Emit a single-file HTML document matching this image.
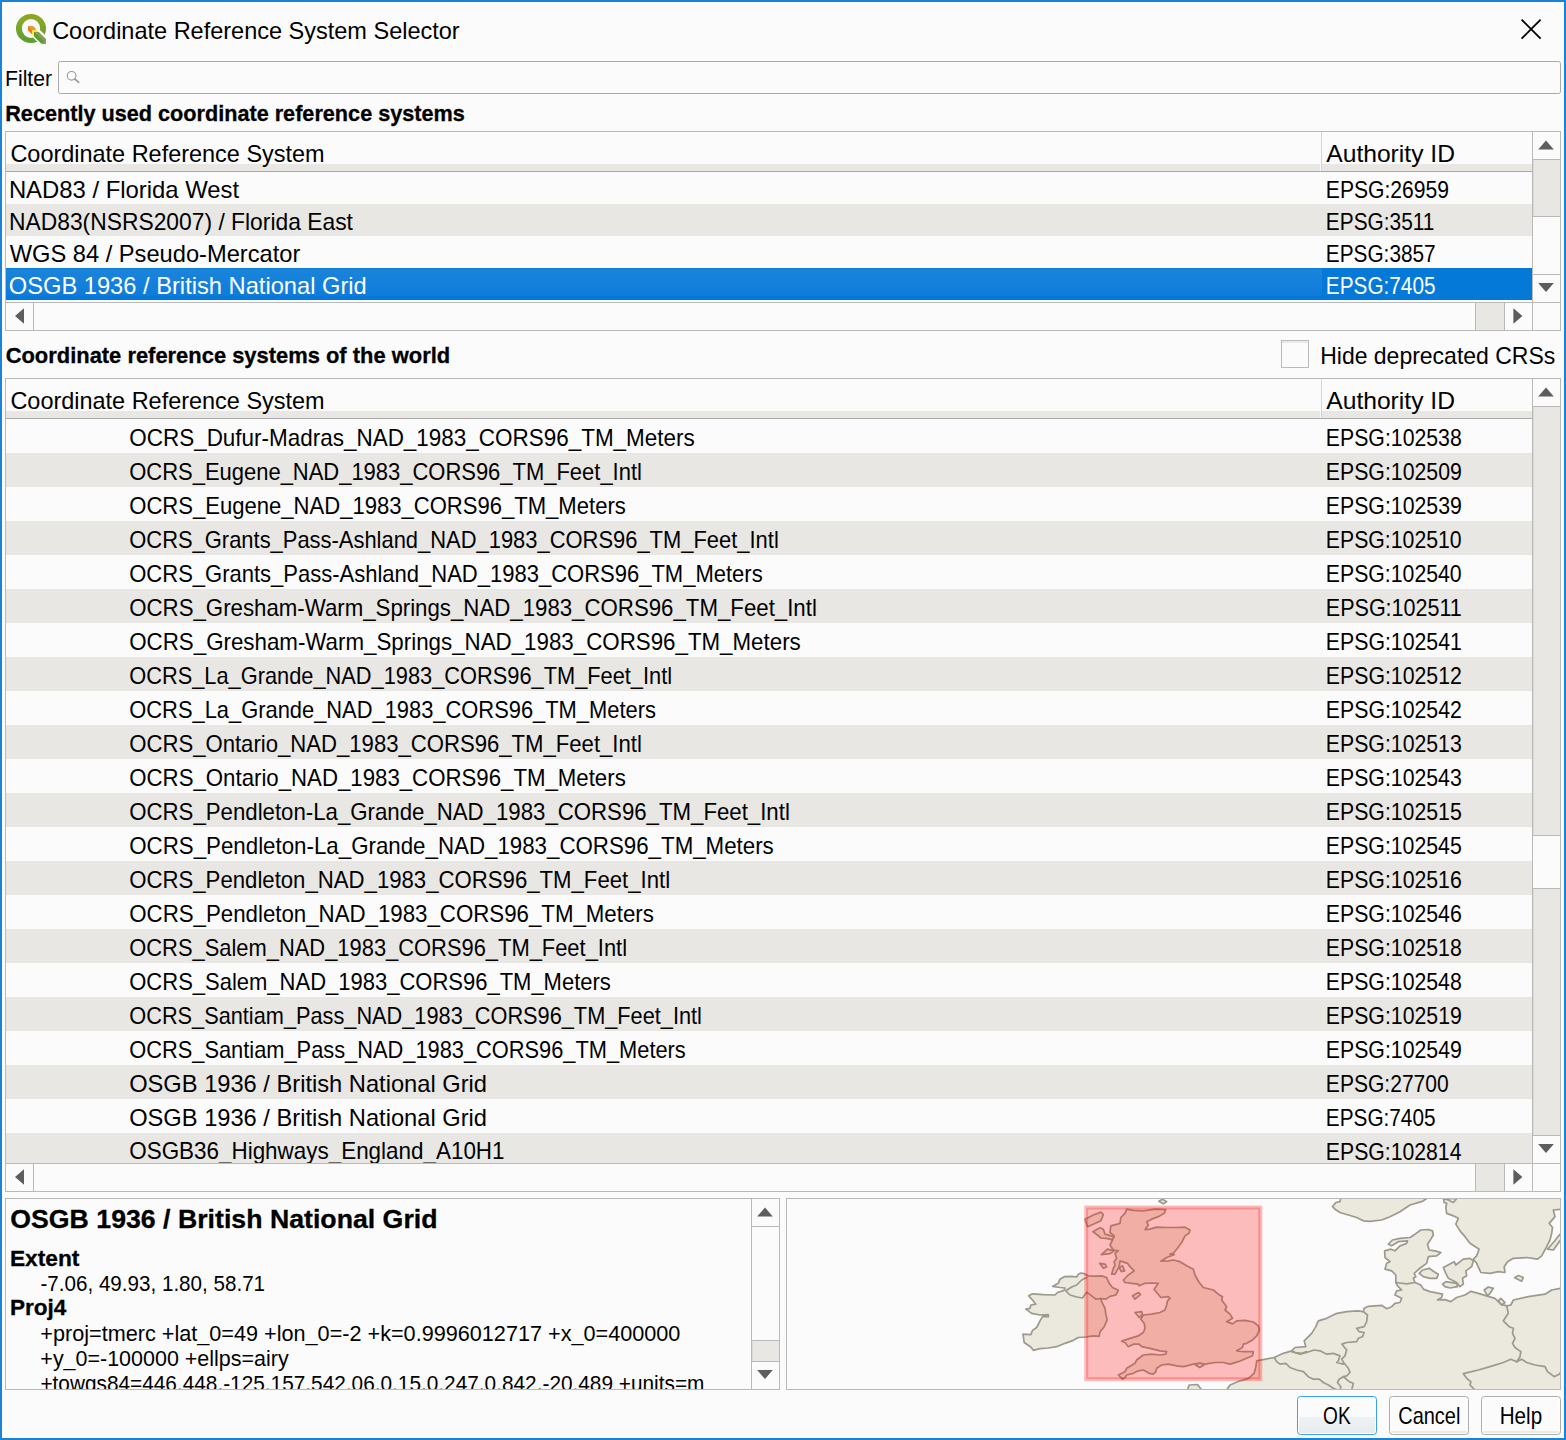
<!DOCTYPE html>
<html lang="en"><head><meta charset="utf-8"><title>Coordinate Reference System Selector</title>
<style>
html,body{margin:0;padding:0;background:#fbfbfb;}
body{width:1566px;height:1440px;overflow:hidden;font-family:"Liberation Sans",sans-serif;font-size:24px;color:#000;}
#win{position:relative;width:1566px;height:1440px;background:#fbfbfb;overflow:hidden;}
#win *{box-sizing:border-box;}
.abs,.t,.grp{position:absolute;}
.grp{left:0;top:0;}
.t{white-space:pre;line-height:40px;font-size:24px;transform-origin:0 0;margin:0;font-weight:400;}
.b{font-weight:700;-webkit-text-stroke:0.3px #000;}
.s22{font-size:22px;}
.s225{font-size:22.5px;}
.s26{font-size:26px;}
.w{color:#fff;}
.frame{position:absolute;left:0;top:0;width:1566px;height:1440px;border:2px solid #1883d7;pointer-events:none;}
.box{position:absolute;border:1px solid #b9b9b8;background:#fbfbfb;}
.hl{position:absolute;height:1px;background:#b9b9b8;}
.vl{position:absolute;width:1px;background:#b9b9b8;}
.alt{position:absolute;background:#e9e7e3;}
.groove{position:absolute;background:#e8e7e3;}
.row{position:absolute;left:6px;width:1526px;}
.row.odd{background:#e9e7e3;}
.clip{position:absolute;overflow:hidden;}
.btn{position:absolute;top:1396px;width:80px;height:39px;border:1px solid #adadad;border-radius:3.5px;background:linear-gradient(to bottom,#fbfbfb 0,#fbfbfb 34px,#eceae6 34.5px,#eceae6 100%);box-shadow:inset 0 0 0 1px #fdfdfd;}
.btn.def{border-color:#3d9ff1;background:linear-gradient(to bottom,#fbfbfb 0,#fbfbfb 20px,#eef2f6 20.5px,#e8edf1 33px,#ece9e5 35px);}
svg{position:absolute;overflow:visible;}
</style></head><body><div id="win">
<div class="grp titlebar">
<svg class="qicon" style="left:14px;top:12px" width="34" height="34" viewBox="14 12 34 34">
<defs><linearGradient id="qg" gradientUnits="userSpaceOnUse" x1="0" y1="13.9" x2="0" y2="43.1"><stop offset="0" stop-color="#97a020"/><stop offset="0.2" stop-color="#87a924"/><stop offset="0.5" stop-color="#76a52a"/><stop offset="0.8" stop-color="#649f2e"/><stop offset="1" stop-color="#5c9d30"/></linearGradient></defs>
<path fill="url(#qg)" fill-rule="evenodd" d="M15.95 28.5 a15.05 14.6 0 1 0 30.1 0 a15.05 14.6 0 1 0 -30.1 0 Z M21.9 28.5 a9.1 9.4 0 1 0 18.2 0 a9.1 9.4 0 1 0 -18.2 0 Z"/>
<path d="M35 25.1 L52 42.1 L52 56.5 L30 34.5 Z" fill="#fbfbfb"/>
<path d="M34 32 L38.6 32 L46 39.3 L46 43.8 L41.3 43.8 L34 36.5 Z" fill="#5f9f30"/>
<path d="M34.2 32 L38.6 32 L46 39.3 L46 42.6 Z" fill="#8e9c5b"/>
<path d="M44.2 41 L46 39.5 L46 43.8 L43 43.8 Z" fill="#76aa50"/>
<path d="M28 26 L32.8 26 L36.2 29.4 L32 30.3 L32 34.2 L28 30.6 Z" fill="#ee7c15"/>
<path d="M28 26 L32.8 26 L36.2 29.4 L32 30.3 Z" fill="#f1933c"/>
<path d="M32 30.3 L36.8 30 L38.4 32 L34 32 L34 36.2 L32 34.2 Z" fill="#f6e73f"/>
</svg>
<div class="t" style="left:52px;top:11px;transform:translateX(0.13px) scaleX(0.9792)">Coordinate Reference System Selector</div>
<svg class="close" style="left:1519px;top:17px" width="24" height="24" viewBox="1519 17 24 24"><path d="M1521.6 19.6 L1540.6 38.6 M1540.6 19.6 L1521.6 38.6" stroke="#000" stroke-width="1.85" fill="none"/></svg>
</div>
<div class="grp filterrow">
<label class="t s22" style="left:4px;top:59px;transform:translateX(1.00px) scaleX(0.9623)">Filter</label>
<div class="abs search" style="left:58px;top:61px;width:1503px;height:33px;border:1px solid #a9a9a7;border-radius:2.5px;background:#fbfbfb"></div>
<svg style="left:64px;top:69px" width="18" height="16" viewBox="64 69 18 16"><circle cx="71.6" cy="75.8" r="4.3" fill="none" stroke="#9a9a98" stroke-width="1.1"/><path d="M74.8 79 L78.7 82.4" stroke="#9a9a98" stroke-width="1.7" stroke-linecap="round"/></svg>
</div>
<div class="t b s225" style="left:5px;top:94px;transform:translateX(0.23px) scaleX(0.9621)">Recently used coordinate reference systems</div>
<div class="grp tree recent">
<div class="box" style="left:5px;top:131px;width:1556px;height:200px"></div>
<div class="grp thead">
<div class="alt" style="left:6px;top:164px;width:1526px;height:7px"></div>
<div class="hl" style="left:6px;top:171px;width:1526px;background:#a9a9a7"></div>
<div class="vl" style="left:1320px;top:164px;height:7px;background:#fbfbfb"></div>
<div class="vl" style="left:1321px;top:132px;height:39px;background:#d6d6d5"></div>
<span class="t" style="left:10px;top:134px;transform:translateX(0.43px) scaleX(0.9771)">Coordinate Reference System</span>
<span class="t" style="left:1326px;top:134px;transform:translateX(0.27px) scaleX(1.0260)">Authority ID</span>
</div>
<div class="grp tbody">
<span class="t" style="left:8px;top:170px;transform:translateX(0.89px) scaleX(0.9941)">NAD83 / Florida West</span>
<span class="t" style="left:1325px;top:170px;transform:translateX(0.84px) scaleX(0.8794)">EPSG:26959</span>
<div class="row odd" style="top:204px;height:32px"></div>
<span class="t" style="left:8px;top:202px;transform:translateX(0.99px) scaleX(0.9514)">NAD83(NSRS2007) / Florida East</span>
<span class="t" style="left:1325px;top:202px;transform:translateX(0.86px) scaleX(0.8684)">EPSG:3511</span>
<span class="t" style="left:9px;top:234px;transform:translateX(0.69px) scaleX(0.9860)">WGS 84 / Pseudo-Mercator</span>
<span class="t" style="left:1325px;top:234px;transform:translateX(0.87px) scaleX(0.8658)">EPSG:3857</span>
<div class="row sel" style="top:268px;height:32px;background:linear-gradient(to bottom,#0a7bd9 0,#1a84da 2px,#1480db 16px,#0e7cdb 27px,#0479d8 29px)"></div>
<div class="abs" style="left:1322px;top:268px;width:210px;height:32px;background:#0479d8"></div>
<span class="t w" style="left:8px;top:266px;transform:translateX(0.78px) scaleX(0.9866)">OSGB 1936 / British National Grid</span>
<span class="t w" style="left:1325px;top:266px;transform:translateX(0.87px) scaleX(0.8648)">EPSG:7405</span>
</div>
<div class="grp vscroll">
<div class="vl" style="left:1532px;top:132px;height:170px"></div>
<div class="groove" style="left:1533px;top:160px;width:27px;height:114px"></div>
<div class="vl" style="left:1533px;top:160px;height:114px;background:#dad9d7"></div>
<div class="abs thumb" style="left:1533px;top:217px;width:27px;height:57px;background:#fbfbfb"></div>
<div class="hl" style="left:1533px;top:216px;width:27px"></div>
<div class="hl" style="left:1533px;top:274px;width:27px"></div>
<div class="hl" style="left:1533px;top:159px;width:27px"></div>
<svg style="left:1537px;top:139px" width="19" height="12" viewBox="1537 139 19 12"><polygon points="1546,140.6 1553.8,149.6 1538.2,149.6" fill="#5d5d5b"/></svg>
<svg style="left:1537px;top:282px" width="19" height="12" viewBox="1537 282 19 12"><polygon points="1546,292.1 1553.8,283.1 1538.2,283.1" fill="#5d5d5b"/></svg>
</div>
<div class="grp hscroll">
<div class="hl" style="left:6px;top:302px;width:1554px"></div>
<div class="groove" style="left:34px;top:303px;width:1470px;height:27px"></div>
<div class="abs thumb" style="left:34px;top:303px;width:1441px;height:27px;background:#fbfbfb"></div>
<div class="vl" style="left:1504px;top:303px;height:27px"></div>
<div class="vl" style="left:33px;top:303px;height:27px"></div>
<div class="vl" style="left:1475px;top:303px;height:27px"></div>
<div class="vl" style="left:1532px;top:303px;height:27px"></div>
<svg style="left:14px;top:307px" width="12" height="19" viewBox="14 307 12 19"><polygon points="15,316 24,308.2 24,323.8" fill="#5d5d5b"/></svg>
<svg style="left:1512px;top:307px" width="12" height="19" viewBox="1512 307 12 19"><polygon points="1522.4,316 1513.4,308.2 1513.4,323.8" fill="#5d5d5b"/></svg>
</div>
</div>
<div class="t b s225" style="left:5px;top:336px;transform:translateX(0.64px) scaleX(0.9740)">Coordinate reference systems of the world</div>
<div class="grp checkbox">
<div class="abs" style="left:1281px;top:340px;width:28px;height:28px;border:1px solid #bbbbba;background:linear-gradient(to bottom,#eceae6 0,#eceae6 2px,#fbfbfb 2px)"></div>
<label class="t" style="left:1320px;top:336px;transform:translateX(0.17px) scaleX(0.9577)">Hide deprecated CRSs</label>
</div>
<div class="grp tree world">
<div class="box" style="left:5px;top:378px;width:1556px;height:814px"></div>
<div class="grp thead">
<div class="alt" style="left:6px;top:411px;width:1526px;height:7px"></div>
<div class="hl" style="left:6px;top:418px;width:1526px;background:#a9a9a7"></div>
<div class="vl" style="left:1320px;top:411px;height:7px;background:#fbfbfb"></div>
<div class="vl" style="left:1321px;top:379px;height:39px;background:#d6d6d5"></div>
<span class="t" style="left:10px;top:381px;transform:translateX(0.43px) scaleX(0.9771)">Coordinate Reference System</span>
<span class="t" style="left:1326px;top:381px;transform:translateX(0.27px) scaleX(1.0260)">Authority ID</span>
</div>
<div class="clip tbody" style="left:0;top:419px;width:1532px;height:744px">
<span class="t" style="left:129px;top:-1px;transform:translateX(0.24px) scaleX(0.9359)">OCRS_Dufur-Madras_NAD_1983_CORS96_TM_Meters</span>
<span class="t" style="left:1325px;top:-1px;transform:translateX(0.82px) scaleX(0.8858)">EPSG:102538</span>
<div class="row odd" style="top:34px;height:34px"></div>
<span class="t" style="left:129px;top:33px;transform:translateX(0.27px) scaleX(0.9149)">OCRS_Eugene_NAD_1983_CORS96_TM_Feet_Intl</span>
<span class="t" style="left:1325px;top:33px;transform:translateX(0.82px) scaleX(0.8861)">EPSG:102509</span>
<span class="t" style="left:129px;top:67px;transform:translateX(0.26px) scaleX(0.9190)">OCRS_Eugene_NAD_1983_CORS96_TM_Meters</span>
<span class="t" style="left:1325px;top:67px;transform:translateX(0.82px) scaleX(0.8861)">EPSG:102539</span>
<div class="row odd" style="top:102px;height:34px"></div>
<span class="t" style="left:129px;top:101px;transform:translateX(0.27px) scaleX(0.9135)">OCRS_Grants_Pass-Ashland_NAD_1983_CORS96_TM_Feet_Intl</span>
<span class="t" style="left:1325px;top:101px;transform:translateX(0.83px) scaleX(0.8852)">EPSG:102510</span>
<span class="t" style="left:129px;top:135px;transform:translateX(0.26px) scaleX(0.9167)">OCRS_Grants_Pass-Ashland_NAD_1983_CORS96_TM_Meters</span>
<span class="t" style="left:1325px;top:135px;transform:translateX(0.83px) scaleX(0.8852)">EPSG:102540</span>
<div class="row odd" style="top:170px;height:34px"></div>
<span class="t" style="left:129px;top:169px;transform:translateX(0.25px) scaleX(0.9266)">OCRS_Gresham-Warm_Springs_NAD_1983_CORS96_TM_Feet_Intl</span>
<span class="t" style="left:1325px;top:169px;transform:translateX(0.80px) scaleX(0.8970)">EPSG:102511</span>
<span class="t" style="left:129px;top:203px;transform:translateX(0.25px) scaleX(0.9300)">OCRS_Gresham-Warm_Springs_NAD_1983_CORS96_TM_Meters</span>
<span class="t" style="left:1325px;top:203px;transform:translateX(0.82px) scaleX(0.8863)">EPSG:102541</span>
<div class="row odd" style="top:238px;height:34px"></div>
<span class="t" style="left:129px;top:237px;transform:translateX(0.27px) scaleX(0.9082)">OCRS_La_Grande_NAD_1983_CORS96_TM_Feet_Intl</span>
<span class="t" style="left:1325px;top:237px;transform:translateX(0.82px) scaleX(0.8864)">EPSG:102512</span>
<span class="t" style="left:129px;top:271px;transform:translateX(0.27px) scaleX(0.9117)">OCRS_La_Grande_NAD_1983_CORS96_TM_Meters</span>
<span class="t" style="left:1325px;top:271px;transform:translateX(0.82px) scaleX(0.8864)">EPSG:102542</span>
<div class="row odd" style="top:306px;height:34px"></div>
<span class="t" style="left:129px;top:305px;transform:translateX(0.26px) scaleX(0.9215)">OCRS_Ontario_NAD_1983_CORS96_TM_Feet_Intl</span>
<span class="t" style="left:1325px;top:305px;transform:translateX(0.82px) scaleX(0.8859)">EPSG:102513</span>
<span class="t" style="left:129px;top:339px;transform:translateX(0.25px) scaleX(0.9259)">OCRS_Ontario_NAD_1983_CORS96_TM_Meters</span>
<span class="t" style="left:1325px;top:339px;transform:translateX(0.82px) scaleX(0.8859)">EPSG:102543</span>
<div class="row odd" style="top:374px;height:34px"></div>
<span class="t" style="left:129px;top:373px;transform:translateX(0.25px) scaleX(0.9255)">OCRS_Pendleton-La_Grande_NAD_1983_CORS96_TM_Feet_Intl</span>
<span class="t" style="left:1325px;top:373px;transform:translateX(0.82px) scaleX(0.8856)">EPSG:102515</span>
<span class="t" style="left:129px;top:407px;transform:translateX(0.25px) scaleX(0.9291)">OCRS_Pendleton-La_Grande_NAD_1983_CORS96_TM_Meters</span>
<span class="t" style="left:1325px;top:407px;transform:translateX(0.82px) scaleX(0.8856)">EPSG:102545</span>
<div class="row odd" style="top:442px;height:34px"></div>
<span class="t" style="left:129px;top:441px;transform:translateX(0.26px) scaleX(0.9235)">OCRS_Pendleton_NAD_1983_CORS96_TM_Feet_Intl</span>
<span class="t" style="left:1325px;top:441px;transform:translateX(0.82px) scaleX(0.8859)">EPSG:102516</span>
<span class="t" style="left:129px;top:475px;transform:translateX(0.25px) scaleX(0.9275)">OCRS_Pendleton_NAD_1983_CORS96_TM_Meters</span>
<span class="t" style="left:1325px;top:475px;transform:translateX(0.82px) scaleX(0.8859)">EPSG:102546</span>
<div class="row odd" style="top:510px;height:34px"></div>
<span class="t" style="left:129px;top:509px;transform:translateX(0.27px) scaleX(0.9123)">OCRS_Salem_NAD_1983_CORS96_TM_Feet_Intl</span>
<span class="t" style="left:1325px;top:509px;transform:translateX(0.82px) scaleX(0.8858)">EPSG:102518</span>
<span class="t" style="left:129px;top:543px;transform:translateX(0.26px) scaleX(0.9163)">OCRS_Salem_NAD_1983_CORS96_TM_Meters</span>
<span class="t" style="left:1325px;top:543px;transform:translateX(0.82px) scaleX(0.8858)">EPSG:102548</span>
<div class="row odd" style="top:578px;height:34px"></div>
<span class="t" style="left:129px;top:577px;transform:translateX(0.28px) scaleX(0.9056)">OCRS_Santiam_Pass_NAD_1983_CORS96_TM_Feet_Intl</span>
<span class="t" style="left:1325px;top:577px;transform:translateX(0.82px) scaleX(0.8861)">EPSG:102519</span>
<span class="t" style="left:129px;top:611px;transform:translateX(0.27px) scaleX(0.9089)">OCRS_Santiam_Pass_NAD_1983_CORS96_TM_Meters</span>
<span class="t" style="left:1325px;top:611px;transform:translateX(0.82px) scaleX(0.8861)">EPSG:102549</span>
<div class="row odd" style="top:646px;height:34px"></div>
<span class="t" style="left:129px;top:645px;transform:translateX(0.18px) scaleX(0.9860)">OSGB 1936 / British National Grid</span>
<span class="t" style="left:1325px;top:645px;transform:translateX(0.84px) scaleX(0.8771)">EPSG:27700</span>
<span class="t" style="left:129px;top:679px;transform:translateX(0.18px) scaleX(0.9860)">OSGB 1936 / British National Grid</span>
<span class="t" style="left:1325px;top:679px;transform:translateX(0.87px) scaleX(0.8648)">EPSG:7405</span>
<div class="row odd" style="top:714px;height:34px"></div>
<span class="t" style="left:129px;top:712px;transform:translateX(0.24px) scaleX(0.9345)">OSGB36_Highways_England_A10H1</span>
<span class="t" style="left:1325px;top:713px;transform:translateX(0.83px) scaleX(0.8839)">EPSG:102814</span>
</div>
<div class="grp vscroll">
<div class="vl" style="left:1532px;top:379px;height:784px"></div>
<div class="groove" style="left:1533px;top:407px;width:27px;height:728px"></div>
<div class="vl" style="left:1533px;top:407px;height:728px;background:#dad9d7"></div>
<div class="abs thumb" style="left:1533px;top:836px;width:27px;height:52px;background:#fbfbfb"></div>
<div class="hl" style="left:1533px;top:888px;width:27px"></div>
<div class="hl" style="left:1533px;top:835px;width:27px"></div>
<div class="hl" style="left:1533px;top:406px;width:27px"></div>
<div class="hl" style="left:1533px;top:1135px;width:27px"></div>
<svg style="left:1537px;top:386px" width="19" height="12" viewBox="1537 386 19 12"><polygon points="1546,387.6 1553.8,396.6 1538.2,396.6" fill="#5d5d5b"/></svg>
<svg style="left:1537px;top:1143px" width="19" height="12" viewBox="1537 1143 19 12"><polygon points="1546,1153.1 1553.8,1144.1 1538.2,1144.1" fill="#5d5d5b"/></svg>
</div>
<div class="grp hscroll">
<div class="hl" style="left:6px;top:1163px;width:1554px"></div>
<div class="groove" style="left:34px;top:1164px;width:1470px;height:27px"></div>
<div class="abs thumb" style="left:34px;top:1164px;width:1441px;height:27px;background:#fbfbfb"></div>
<div class="vl" style="left:1504px;top:1164px;height:27px"></div>
<div class="vl" style="left:33px;top:1164px;height:27px"></div>
<div class="vl" style="left:1475px;top:1164px;height:27px"></div>
<div class="vl" style="left:1532px;top:1164px;height:27px"></div>
<svg style="left:14px;top:1168px" width="12" height="19" viewBox="14 1168 12 19"><polygon points="15,1177 24,1169.2 24,1184.8" fill="#5d5d5b"/></svg>
<svg style="left:1512px;top:1168px" width="12" height="19" viewBox="1512 1168 12 19"><polygon points="1522.4,1177 1513.4,1169.2 1513.4,1184.8" fill="#5d5d5b"/></svg>
</div>
</div>
<div class="grp info">
<div class="box" style="left:5px;top:1198px;width:775px;height:192px"></div>
<div class="clip" style="left:6px;top:1199px;width:745px;height:190px">
<div class="t b s26" style="left:4px;top:0px;transform:translateX(0.28px) scaleX(1.0267)">OSGB 1936 / British National Grid</div>
<div class="t b s225" style="left:3px;top:40px;transform:translateX(0.95px) scaleX(1.0103)">Extent</div>
<div class="t s22" style="left:34px;top:65px;transform:translateX(0.45px) scaleX(0.9369)">-7.06, 49.93, 1.80, 58.71</div>
<div class="t b s225" style="left:3px;top:89px;transform:translateX(0.97px) scaleX(1.0028)">Proj4</div>
<div class="t s22" style="left:34px;top:115px;transform:translateX(0.34px) scaleX(0.9835)">+proj=tmerc +lat_0=49 +lon_0=-2 +k=0.9996012717 +x_0=400000</div>
<div class="t s22" style="left:34px;top:140px;transform:translateX(0.34px) scaleX(0.9759)">+y_0=-100000 +ellps=airy</div>
<div class="t s22" style="left:34px;top:165px;transform:translateX(0.38px) scaleX(0.9457)">+towgs84=446.448,-125.157,542.06,0.15,0.247,0.842,-20.489 +units=m</div>
</div>
<div class="grp vscroll">
<div class="vl" style="left:751px;top:1199px;height:190px"></div>
<div class="groove" style="left:752px;top:1227px;width:27px;height:134px"></div>
<div class="vl" style="left:752px;top:1227px;height:134px;background:#dad9d7"></div>
<div class="abs thumb" style="left:752px;top:1227px;width:27px;height:113px;background:#fbfbfb"></div>
<div class="hl" style="left:752px;top:1361px;width:27px"></div>
<div class="hl" style="left:752px;top:1226px;width:27px"></div>
<div class="hl" style="left:752px;top:1340px;width:27px"></div>
<svg style="left:756px;top:1206px" width="19" height="12" viewBox="756 1206 19 12"><polygon points="765,1207.6 772.8,1216.6 757.2,1216.6" fill="#5d5d5b"/></svg>
<svg style="left:756px;top:1369px" width="19" height="12" viewBox="756 1369 19 12"><polygon points="765,1379.1 772.8,1370.1 757.2,1370.1" fill="#5d5d5b"/></svg>
</div>
</div>
<div class="grp map">
<div class="box" style="left:786px;top:1198px;width:775px;height:192px"></div>
<div class="clip" style="left:787px;top:1199px;width:773px;height:190px">
<svg class="mapsvg" style="left:0;top:0" width="773" height="190" viewBox="787 1199 773 190">
<g fill="#ebe9dd" stroke="#9c9a8d" stroke-width="1.7" stroke-linejoin="round" stroke-linecap="round">
<path fill="#ebe9dd" stroke="none" d="M1226.67 1390 L1230 1385 L1240 1380.83 L1248.33 1378.33 L1254.17 1373.33 L1255.83 1366.67 L1256.67 1361.67 L1256.67 1360.83 L1274.17 1357.5 L1283.33 1353.33 L1291.67 1350.83 L1295 1347.5 L1305.83 1346.67 L1304.17 1340.83 L1311.67 1333.33 L1315.83 1326.67 L1318.33 1320.83 L1326.67 1318.33 L1335.83 1313.67 L1346.67 1311.67 L1357.5 1310.83 L1363.33 1311.67 L1364.17 1308.33 L1368.33 1306.33 L1381.67 1305.33 L1386.67 1308.67 L1391.67 1306.67 L1395 1303.33 L1400 1302.5 L1401.67 1298.33 L1395 1295 L1396.67 1290.83 L1401.67 1290 L1397.5 1285.83 L1395.83 1282.5 L1395.83 1275 L1391.67 1270.83 L1385 1269.17 L1386.67 1263.33 L1390 1261.67 L1385 1257.5 L1384.67 1250.83 L1390.83 1249.17 L1395 1250.83 L1400 1245.83 L1406.67 1243.33 L1407.5 1240.83 L1398.33 1241.67 L1391.67 1245.83 L1388.33 1244.17 L1392.5 1240 L1400 1238.33 L1410 1237.5 L1415 1234.17 L1420.83 1230 L1428.33 1229.5 L1432.5 1230.83 L1433.33 1235 L1430.83 1239.17 L1427.5 1244.17 L1429.17 1250 L1435 1250.83 L1440.83 1252.5 L1436.67 1255.83 L1428.33 1256.67 L1426.67 1263.33 L1420.83 1267.5 L1414.17 1273.33 L1415.83 1276.67 L1413.33 1278.33 L1415 1282.5 L1420.83 1285 L1423.33 1289.17 L1430 1291.67 L1442.5 1294.17 L1441.67 1297.5 L1437.5 1300 L1445 1299.67 L1450.83 1301.67 L1456.67 1297.5 L1465 1295 L1470.83 1291.33 L1478.33 1293.33 L1486.67 1295.83 L1495 1298.33 L1500.83 1304.17 L1506.67 1305.83 L1510.83 1305 L1513.33 1300 L1528.33 1296.67 L1545 1294.17 L1551.67 1290 L1562.5 1288 L1562.5 1390.83 L1226.67 1390.83 Z"/>
<path fill="none" d="M1226.67 1390 L1230 1385 L1240 1380.83 L1248.33 1378.33 L1254.17 1373.33 L1255.83 1366.67 L1256.67 1361.67 L1256.67 1360.83 L1274.17 1357.5 L1283.33 1353.33 L1291.67 1350.83 L1295 1347.5 L1305.83 1346.67 L1304.17 1340.83 L1311.67 1333.33 L1315.83 1326.67 L1318.33 1320.83 L1326.67 1318.33 L1335.83 1313.67 L1346.67 1311.67 L1357.5 1310.83 L1363.33 1311.67 L1364.17 1308.33 L1368.33 1306.33 L1381.67 1305.33 L1386.67 1308.67 L1391.67 1306.67 L1395 1303.33 L1400 1302.5 L1401.67 1298.33 L1395 1295 L1396.67 1290.83 L1401.67 1290 L1397.5 1285.83 L1395.83 1282.5 L1395.83 1275 L1391.67 1270.83 L1385 1269.17 L1386.67 1263.33 L1390 1261.67 L1385 1257.5 L1384.67 1250.83 L1390.83 1249.17 L1395 1250.83 L1400 1245.83 L1406.67 1243.33 L1407.5 1240.83 L1398.33 1241.67 L1391.67 1245.83 L1388.33 1244.17 L1392.5 1240 L1400 1238.33 L1410 1237.5 L1415 1234.17 L1420.83 1230 L1428.33 1229.5 L1432.5 1230.83 L1433.33 1235 L1430.83 1239.17 L1427.5 1244.17 L1429.17 1250 L1435 1250.83 L1440.83 1252.5 L1436.67 1255.83 L1428.33 1256.67 L1426.67 1263.33 L1420.83 1267.5 L1414.17 1273.33 L1415.83 1276.67 L1413.33 1278.33 L1415 1282.5 L1420.83 1285 L1423.33 1289.17 L1430 1291.67 L1442.5 1294.17 L1441.67 1297.5 L1437.5 1300 L1445 1299.67 L1450.83 1301.67 L1456.67 1297.5 L1465 1295 L1470.83 1291.33 L1478.33 1293.33 L1486.67 1295.83 L1495 1298.33 L1500.83 1304.17 L1506.67 1305.83 L1510.83 1305 L1513.33 1300 L1528.33 1296.67 L1545 1294.17 L1551.67 1290 L1562.5 1288"/>
<path fill="none" d="M1274.17 1357.5 L1276.67 1361.67 L1280 1364.17 L1285.83 1363.33 L1290 1367.5 L1296.67 1370 L1303.33 1371.67 L1308.33 1376.67 L1313.33 1379.17 L1319.17 1379.17 L1323.33 1382.5 L1328.33 1385 L1333.33 1388.33 L1337.5 1390"/>
<path fill="none" d="M1291.67 1351.67 L1300 1354.17 L1306.67 1352.5 L1314.17 1350 L1320 1350.83 L1326.67 1354.17 L1333.33 1353.33 L1340 1355.83 L1338.33 1360.83 L1336.67 1362.5 L1343.33 1364.17"/>
<path fill="none" d="M1291.67 1350.83 L1295 1352.5 L1301.67 1353.33 L1306.67 1351.67"/>
<path fill="none" d="M1363.33 1311.67 L1367.5 1315 L1366.67 1321.67 L1364.17 1326.67 L1356.67 1328.33 L1359.17 1331.67 L1364.17 1332.5 L1362.5 1336.67 L1358.33 1338.33 L1356.67 1341.67 L1346.67 1342.5 L1342 1344.17 L1346.67 1350 L1345 1355.83 L1341.67 1359.17 L1344.17 1363.33 L1348.33 1368.33 L1350 1372.5 L1346.67 1375.83 L1343.33 1376.67 L1349.17 1381.67 L1353.33 1383.33 L1351.67 1390"/>
<path fill="none" d="M1343.33 1376.67 L1339.17 1379.17 L1337.5 1382.5 L1340.83 1386.67 L1340 1390"/>
<path fill="none" d="M1395.83 1282.5 L1406.67 1283.83 L1415 1282.5"/>
<path fill="none" d="M1506.67 1305.83 L1508.33 1313.33 L1503.33 1320.83 L1509.17 1326.67 L1513.33 1328.33 L1512.5 1333.33 L1515 1338.33 L1512.5 1343.33 L1515 1347.5 L1520.83 1351.67 L1520 1356.67 L1516.67 1361.67"/>
<path fill="none" d="M1516.67 1361.67 L1510.83 1359.17 L1503.33 1362.5 L1490 1366.67 L1478.33 1370 L1463.33 1373.67 L1467.5 1379.17 L1470.83 1381.67 L1470 1385 L1475 1390"/>
<path fill="none" d="M1516.67 1361.67 L1521.67 1359.17 L1526.67 1362.5 L1535 1365 L1545 1366.67 L1547.5 1371.67 L1554.17 1376.67 L1559.17 1374.17 L1562.5 1370"/>
<path d="M1332.5 1206.67 L1335.83 1202.5 L1340 1201.67 L1340.83 1197.5 L1428.33 1197.5 L1421.67 1201.67 L1410 1205 L1400 1211.67 L1390 1216.67 L1381.67 1220 L1370 1221.33 L1363.33 1220.83 L1356.67 1217.5 L1348.33 1215 L1340 1212.5 L1335 1209.17 Z"/>
<path d="M1443.33 1197.5 L1444.17 1202.5 L1446.67 1203.33 L1445.83 1207.5 L1446.67 1213.33 L1453.33 1215.83 L1458.33 1218.33 L1455.83 1224.17 L1460 1230.83 L1465 1236.67 L1470 1243.33 L1479.17 1249.17 L1476.67 1255.83 L1473.33 1259.17 L1476.67 1263.33 L1480.83 1272.5 L1490 1273.33 L1498.33 1271.67 L1505 1272.5 L1504.17 1266.67 L1507.5 1261.67 L1513.33 1258.33 L1526.67 1257.5 L1537.5 1259.17 L1541.67 1255.83 L1546.67 1246.67 L1550 1240 L1551.67 1233.33 L1552.5 1227.5 L1549.17 1223.33 L1555 1216.67 L1553.33 1210 L1562.5 1209.17 L1562.5 1197.5 Z"/>
<path fill="#fbfbfb" d="M1443.33 1198.67 L1448.33 1200 L1453.33 1202.5 L1456.67 1198.67 Z"/>
<path d="M1080.83 1273 L1084.17 1273.67 L1088.33 1275.83 L1096.67 1276.17 L1101.67 1275.83 L1106.67 1277.5 L1109.17 1283.33 L1112.5 1287.5 L1118.33 1290.33 L1115.83 1295 L1110 1296.33 L1105.83 1299.17 L1100.83 1298.67 L1101.67 1301.67 L1105 1308.33 L1105.83 1314.17 L1107.17 1320 L1104.17 1326.67 L1100 1331.67 L1099.17 1336.33 L1093.33 1335.83 L1085.83 1337 L1078.33 1337.5 L1073.33 1340.33 L1065 1343.33 L1056.67 1346.67 L1048.33 1348 L1040 1348.67 L1033.33 1350.33 L1030.83 1347 L1024.17 1342.5 L1023 1334.17 L1030.83 1334.67 L1032.5 1330.33 L1036.67 1327.5 L1040 1320.83 L1042.5 1316.67 L1048.33 1316.67 L1048.33 1314.67 L1040 1315 L1031.67 1313.33 L1025.83 1309.17 L1030 1308.33 L1030.83 1305 L1035.83 1304.17 L1032.5 1300 L1028.67 1295.83 L1032.5 1293.83 L1043.33 1294.67 L1055 1295 L1057.5 1292.5 L1064.17 1290.33 L1065 1288 L1060 1287.5 L1052.83 1286.33 L1058.33 1283.33 L1060 1279.17 L1064.17 1276.67 L1071.67 1276.33 L1076.67 1277 L1078.33 1274.17 Z"/>
<path fill="none" d="M1086.67 1277.5 L1081.67 1280 L1076.67 1285 L1071.67 1287 L1065.83 1290.83 L1070 1295 L1076.67 1297 L1082.5 1298 L1086.67 1292.17 L1091.67 1295.83 L1095.83 1299.17 L1100.83 1298.67"/>
<path d="M1126.67 1209.17 L1133.33 1210.33 L1143.33 1210.83 L1155 1209.17 L1165.83 1209.67 L1164.17 1213.33 L1158.33 1216.67 L1151.67 1219.17 L1146.67 1221.67 L1148.33 1225 L1145 1229.67 L1150 1229.17 L1156.67 1227.17 L1166.67 1227.5 L1176.67 1227.5 L1185 1227.17 L1190 1230 L1189.17 1233 L1185 1235.83 L1181.67 1242.5 L1176.67 1249.17 L1173.33 1253.33 L1170 1254.17 L1174.17 1254.67 L1166.67 1257.5 L1160.83 1261.17 L1168.33 1260.83 L1173.33 1260 L1180 1261.67 L1186.67 1265.83 L1193.33 1269.17 L1195 1275 L1199.17 1282.5 L1203.33 1287.5 L1213.33 1290 L1218.33 1294.17 L1222.5 1296.67 L1221.67 1300 L1226.67 1306.67 L1225 1310 L1230 1314.17 L1232.5 1318.33 L1226.67 1321.67 L1232.5 1323.83 L1236.67 1320.83 L1245 1320.33 L1253.33 1322 L1258.33 1325.83 L1259.5 1330 L1256.67 1335.83 L1252.5 1340 L1246.67 1343.33 L1243.33 1344.17 L1242.5 1347.5 L1236.67 1350.83 L1243.33 1351.67 L1253.33 1351.67 L1252.5 1355.83 L1246.67 1358.33 L1238.33 1361.67 L1230 1364.17 L1223.33 1362.5 L1215 1362.5 L1205 1364.17 L1199.17 1363.33 L1193.33 1364.17 L1186.67 1365.83 L1183.33 1366.67 L1176.67 1365.83 L1168.33 1364.17 L1161.67 1365 L1156.67 1368.33 L1155.83 1371.67 L1153.33 1374.17 L1149.17 1373.33 L1143.33 1370 L1138.33 1370.83 L1133.33 1373.33 L1126.67 1375 L1125 1377.5 L1122.5 1379.17 L1118.33 1375 L1125 1371.67 L1126.67 1368.33 L1135 1363.33 L1136.67 1360 L1143.33 1355 L1151.67 1354.17 L1160 1355 L1165.83 1354.17 L1166.67 1351.67 L1160 1350.83 L1150 1348.33 L1141.67 1346.67 L1139.17 1344.17 L1133.33 1344.17 L1128.33 1346.67 L1125 1342.5 L1121.67 1341.17 L1130 1338.33 L1138.33 1335.83 L1143.33 1332.5 L1145 1328.33 L1144.17 1323.33 L1140.83 1319.17 L1143.33 1315 L1151.67 1314.17 L1160 1312.5 L1165 1310 L1166.67 1305 L1167.5 1300.83 L1170 1298.33 L1168.33 1296.67 L1160.83 1297.5 L1156.67 1292.5 L1154.17 1289.17 L1158.33 1283.33 L1151.67 1283 L1145 1283.33 L1139.17 1285.83 L1138.33 1284.17 L1131.67 1283.33 L1125 1282.5 L1123.33 1280 L1128.33 1275 L1134.17 1270.83 L1130 1266.67 L1127.5 1263.33 L1120 1260.83 L1119.17 1266.67 L1116.67 1270.83 L1115 1274.17 L1111.67 1274.17 L1113.33 1268.33 L1115 1265.83 L1114.17 1261.67 L1116.67 1258.33 L1115 1253.33 L1118.33 1250.83 L1113.33 1250 L1110 1245 L1112.5 1240 L1114.17 1235.83 L1110 1232.5 L1110.83 1225.83 L1120 1223.33 L1120.83 1217.5 L1125 1213.33 Z"/>
<path d="M1085 1219.17 L1093.33 1215 L1100.83 1212.17 L1103.33 1214.67 L1100.83 1220.83 L1093.33 1224.17 L1087.5 1226.67 Z"/>
<path d="M1092.83 1231.67 L1100 1227.83 L1103.33 1229.17 L1105 1234.17 L1110.83 1235.83 L1114.17 1236.67 L1111.67 1239.67 L1106.67 1238.33 L1100.83 1238 L1097.5 1235 Z"/>
<path d="M1101.33 1254.67 L1107.5 1249.17 L1114.17 1250.83 L1110 1253.67 Z"/>
<path d="M1099.67 1263.33 L1105 1264.17 L1106.67 1267 L1103.33 1268.33 Z"/>
<path d="M1119.17 1267.5 L1122.5 1265.83 L1124.67 1270.83 L1121.33 1271.67 Z"/>
<path d="M1132.5 1295.83 L1138.67 1292.5 L1140.5 1294.67 L1135 1299.17 Z"/>
<path d="M1135 1312.5 L1141.67 1311.67 L1142.5 1315 L1139.17 1317.5 Z"/>
<path d="M1195.33 1364.67 L1200 1363 L1204.17 1364.67 L1199.67 1367.5 Z"/>
<path d="M1158.83 1201.33 L1162.5 1199.17 L1166.67 1201.67 L1163.33 1203.67 Z"/>
<path d="M1187.5 1390 L1189.17 1385 L1197.5 1384.5 L1201.67 1390 Z"/>
<path d="M1419.17 1273.33 L1422.5 1270 L1429.17 1268.33 L1434.17 1271.67 L1438.33 1274.17 L1436.67 1278.33 L1430 1278.33 L1423.33 1276.67 Z"/>
<path d="M1443.33 1267.5 L1454.17 1261.67 L1455.83 1265 L1463.33 1259.17 L1470 1258.33 L1473.33 1260.83 L1471.67 1266.67 L1465.83 1270.83 L1466.67 1275.83 L1462.5 1278.33 L1463.33 1284.17 L1460 1286.67 L1456.67 1282.5 L1448.33 1278.33 L1445.83 1273.33 Z"/>
<path d="M1442.5 1284.17 L1445.83 1281.67 L1456.67 1283.33 L1457.5 1286.67 L1450 1288 L1445 1286.67 Z"/>
<path d="M1514.67 1277.83 L1518.33 1275.5 L1523.33 1277.5 L1521.67 1281.17 Z"/>
<path d="M1484.17 1290 L1488.33 1287 L1493.33 1288.33 L1490 1293.33 L1487.5 1295.83 Z"/>
<path d="M1498.33 1300.83 L1500.83 1298.33 L1505 1302.5 L1501.67 1305 Z"/>
<path d="M1547.5 1249.17 L1553.33 1242.5 L1560 1234.17 L1561.67 1238.33 L1553.33 1250 Z"/>
</g>
<rect x="1086.2" y="1207.5" width="174.1" height="171.7" fill="rgba(255,0,0,0.25)" stroke="rgba(255,0,0,0.25)" stroke-width="4"/>
</svg>
</div></div>
<div class="grp buttons">
<div class="btn def" style="left:1297px"></div>
<div class="btn" style="left:1389px"></div>
<div class="btn" style="left:1481px"></div>
<span class="t" style="left:1323px;top:1396px;transform:translateX(0.11px) scaleX(0.7971)">OK</span>
<span class="t" style="left:1398px;top:1396px;transform:translateX(0.22px) scaleX(0.8315)">Cancel</span>
<span class="t" style="left:1499px;top:1396px;transform:translateX(0.68px) scaleX(0.8595)">Help</span>
</div>
<div class="frame"></div>
</div></body></html>
